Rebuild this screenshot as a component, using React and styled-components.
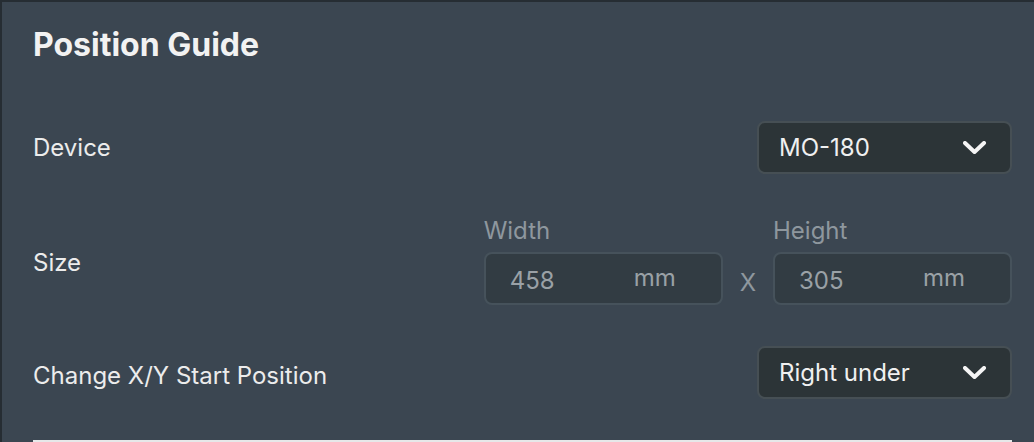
import React from 'react';
import styled, { createGlobalStyle } from 'styled-components';

const GlobalStyle = createGlobalStyle`
	html, body {
		margin: 0;
		padding: 0;
		background: #262d33;
		overflow: hidden;
	}
	body {
		font-family: Inter, "Noto Sans", sans-serif;
	}
`;

const Panel = styled.div`
	box-sizing: border-box;
	width: 1032px;
	height: 440px;
	margin-top: 2px;
	margin-left: 2px;
	background: #3b4651;
	padding: 24px 22px 0 31px;
	display: flex;
	flex-direction: column;
	position: relative;
`;

const Title = styled.h2`
	margin: 0;
	font-size: 32px;
	font-weight: 700;
	color: #f2f2f2;
	line-height: 38px;
`;

const Row = styled.div`
	display: flex;
	align-items: center;
	justify-content: space-between;
	margin-top: ${(p) => p.$top}px;
	min-height: 52px;
`;

const Label = styled.span`
	font-size: 24px;
	color: #ececec;
	margin-top: ${(p) => p.$shift || 0}px;
`;

const Select = styled.div`
	box-sizing: border-box;
	width: 255px;
	height: 53px;
	background: #2c3437;
	border: 2px solid #464f54;
	border-radius: 8px;
	display: flex;
	align-items: center;
	justify-content: space-between;
	padding: 0 23px 0 20px;
	font-size: 24px;
	color: #f0f0f0;
`;

const SizeGroup = styled.div`
	display: flex;
	align-items: flex-end;
	gap: 17px;
`;

const Field = styled.div`
	display: flex;
	flex-direction: column;
	gap: 8px;
`;

const FieldLabel = styled.span`
	font-size: 24px;
	color: #8e979e;
	line-height: 26px;
`;

const Input = styled.div`
	box-sizing: border-box;
	width: 239px;
	height: 53px;
	background: #323c43;
	border: 2px solid #46525b;
	border-radius: 8px;
	display: flex;
	align-items: center;
	padding: 0 0 0 24px;
	font-size: 24px;
	color: #9aa1a6;
`;

const Value = styled.span`
	width: 124px;
	margin-top: 3px;
`;

const Unit = styled.span`
	margin-top: -2px;
`;

const Times = styled.span`
	font-size: 24px;
	color: #8e979e;
	margin-bottom: 8px;
`;

const BottomLine = styled.div`
	position: absolute;
	left: 31px;
	bottom: 0;
	width: 979px;
	height: 2px;
	background: #e6e8e9;
`;

const Chevron = () => (
	<svg width="24" height="14" viewBox="0 0 24 14" fill="none">
		<path d="M2 2l9.5 9 9.5-9" stroke="#f5f5f5" strokeWidth="4" strokeLinecap="round" strokeLinejoin="round" />
	</svg>
);

export default function App() {
	return (
		<>
			<GlobalStyle />
			<Panel>
				<Title>Position Guide</Title>
				<Row $top={57}>
					<Label>Device</Label>
					<Select>
						<span>MO-180</span>
						<Chevron />
					</Select>
				</Row>
				<Row $top={44}>
					<Label $shift={2}>Size</Label>
					<SizeGroup>
						<Field>
							<FieldLabel>Width</FieldLabel>
							<Input>
								<Value>458</Value>
								<Unit>mm</Unit>
							</Input>
						</Field>
						<Times>X</Times>
						<Field>
							<FieldLabel>Height</FieldLabel>
							<Input>
								<Value>305</Value>
								<Unit>mm</Unit>
							</Input>
						</Field>
					</SizeGroup>
				</Row>
				<Row $top={41}>
					<Label $shift={5}>Change X/Y Start Position</Label>
					<Select>
						<span>Right under</span>
						<Chevron />
					</Select>
				</Row>
				<BottomLine />
			</Panel>
		</>
	);
}
